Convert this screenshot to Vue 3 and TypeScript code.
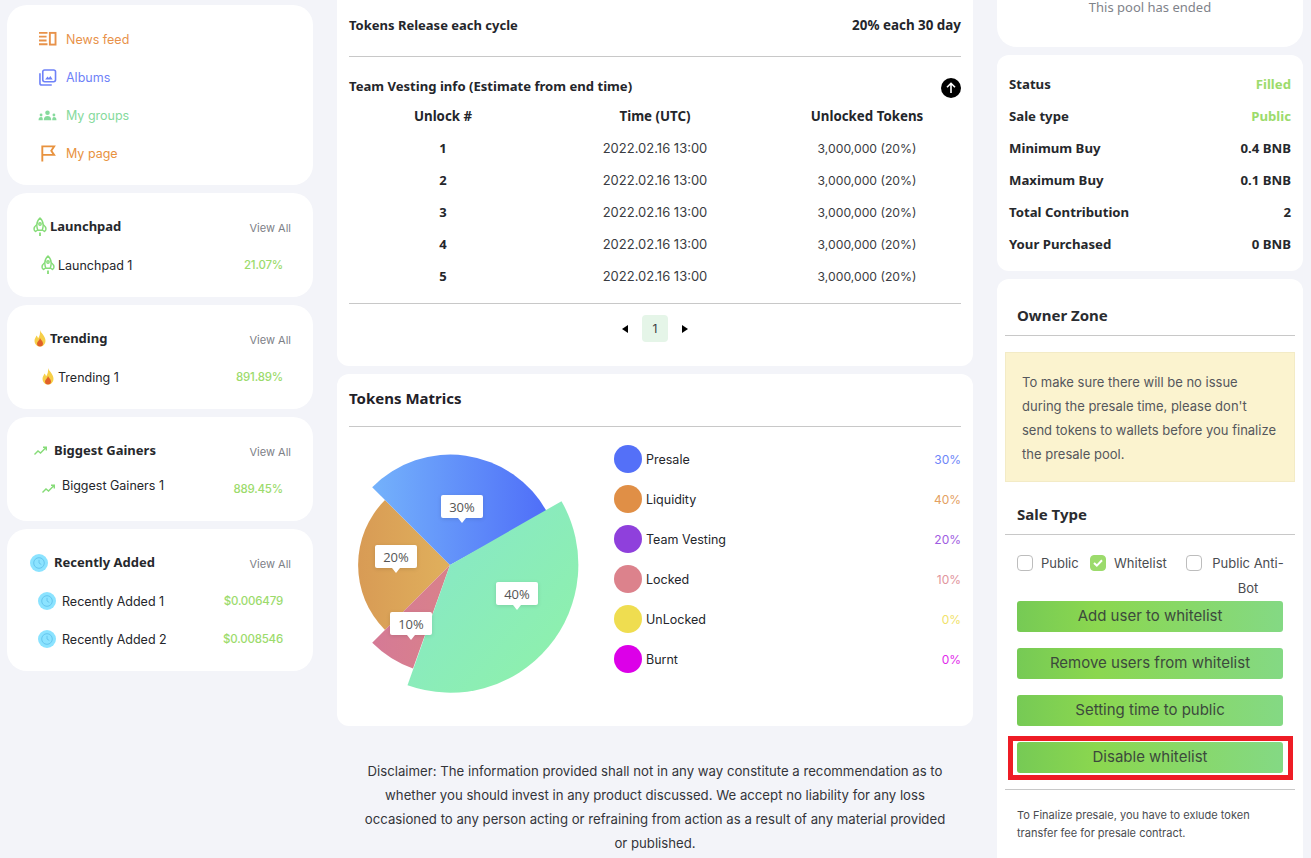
<script setup lang="ts">
const navItems = [
  { label: 'News feed', color: '#e8924a', icon: 'feed' },
  { label: 'Albums', color: '#6f82f8', icon: 'albums' },
  { label: 'My groups', color: '#86da9c', icon: 'groups' },
  { label: 'My page', color: '#e8923e', icon: 'flag' }
]

const lists = [
  { title: 'Launchpad', icon: 'rocket', cls: 'k-rocket', w: 14, h: 20, rows: [{ name: 'Launchpad 1', value: '21.07%' }] },
  { title: 'Trending', icon: 'fire', cls: 'k-fire', w: 14, h: 18, rows: [{ name: 'Trending 1', value: '891.89%' }] },
  { title: 'Biggest Gainers', icon: 'trend', cls: 'k-trend', w: 13, h: 10, rows: [{ name: 'Biggest Gainers 1', value: '889.45%' }] },
  {
    title: 'Recently Added',
    icon: 'clock',
    cls: 'k-clock',
    w: 18,
    h: 18,
    rows: [
      { name: 'Recently Added 1', value: '$0.006479' },
      { name: 'Recently Added 2', value: '$0.008546' }
    ]
  }
]

const vesting = [1, 2, 3, 4, 5]

const legend = [
  { label: 'Presale', value: '30%', color: '#5470f8' },
  { label: 'Liquidity', value: '40%', color: '#e08f46' },
  { label: 'Team Vesting', value: '20%', color: '#8f40dc' },
  { label: 'Locked', value: '10%', color: '#dc828c' },
  { label: 'UnLocked', value: '0%', color: '#efdd50' },
  { label: 'Burnt', value: '0%', color: '#dc00e8' }
]

const saleInfo = [
  { label: 'Status', value: 'Filled', green: true },
  { label: 'Sale type', value: 'Public', green: true },
  { label: 'Minimum Buy', value: '0.4 BNB' },
  { label: 'Maximum Buy', value: '0.1 BNB' },
  { label: 'Total Contribution', value: '2' },
  { label: 'Your Purchased', value: '0 BNB' }
]

const tips = [
  { label: '30%', cls: 'tip-a' },
  { label: '20%', cls: 'tip-b' },
  { label: '10%', cls: 'tip-c' },
  { label: '40%', cls: 'tip-d' }
]
</script>

<template>
  <div class="page">
    <!-- shared list icons -->
    <svg class="symbols" aria-hidden="true">
      <symbol id="rocket" viewBox="0 0 14 20">
        <g fill="none" stroke="#86dc78" stroke-width="1.400">
          <path d="M7 1c2.300 2 3.200 4.500 3.200 7 0 2-.4 3.500-1 5.200H4.800c-.6-1.700-1-3.200-1-5.200C3.800 5.500 4.700 3 7 1z" />
          <path d="M3.800 7.500C2 9 1 10.500 1 12c0 1 .6 2 1.600 2.500l2-1.500M10.200 7.500C12 9 13 10.500 13 12c0 1-.6 2-1.600 2.500l-2-1.500" />
          <path d="M7 15.500V19" stroke-width="1.800" />
          <circle cx="7" cy="7" r="1.200" />
        </g>
      </symbol>
      <symbol id="fire" viewBox="0 0 14 18">
        <path d="M7 0c.5 3 5.500 5.500 5.500 11A5.500 5.500 0 0 1 1.500 11C1.500 8.500 3 7.500 3.500 5.500 4.500 6.500 5 7.500 5 8.500 6.500 6.500 7.500 3 7 0z" fill="#f6cf48" />
        <path d="M7 8c.5 2 3 3 3 5.500a3 3 0 0 1-6 0C4 11.500 6.500 10.500 7 8z" fill="#e0602a" />
      </symbol>
      <symbol id="trend" viewBox="0 0 13 10">
        <path d="M.5 8.500l3.500-3.500 2.500 2L12 1.500M9 1.200h3.300v3.200" fill="none" stroke="#86dc78" stroke-width="1.400" />
      </symbol>
      <symbol id="clock" viewBox="0 0 18 18">
        <circle cx="9" cy="9" r="9" fill="#8be3ff" />
        <circle cx="9" cy="9" r="5.300" fill="none" stroke="#66c6ee" stroke-width="1" />
        <path d="M9 5.800V9l2.300 1.500" fill="none" stroke="#66c6ee" stroke-width="1" />
      </symbol>
    </svg>

    <!-- left column -->
    <aside class="col-left">
      <nav class="card nav-card">
        <a v-for="item in navItems" :key="item.label" class="nav-item" :style="{ color: item.color }">
          <svg class="nav-icon" viewBox="0 0 20 18" fill="none" stroke="currentColor" stroke-width="2">
            <template v-if="item.icon === 'feed'">
              <path d="M1 2h9M1 6h8M1 10h8M1 14h9" />
              <rect x="12.500" y="2" width="6" height="12.400" />
            </template>
            <template v-else-if="item.icon === 'albums'">
              <rect x="5" y="1" width="13.500" height="12.500" rx="2" stroke-width="1.700" />
              <path d="M2 4.500v10.500a2 2 0 0 0 2 2h10.500" stroke-width="1.700" />
              <path d="M7.500 11l2.500-3 1.500 1.500 1.500-2 2.500 3.500z" fill="currentColor" stroke="none" />
            </template>
            <template v-else-if="item.icon === 'groups'">
              <g fill="currentColor" stroke="none">
                <circle cx="10" cy="6" r="2.400" />
                <path d="M6 14c0-3 1.600-4.500 4-4.500s4 1.500 4 4.500z" />
                <circle cx="3.200" cy="8.500" r="1.500" />
                <path d="M.500 14c0-2 1-3.300 2.700-3.300S5 11.500 5 14z" />
                <circle cx="16.800" cy="8.500" r="1.500" />
                <path d="M15 14c0-2.500.8-3.300 1.800-3.300 1.700 0 2.700 1.300 2.700 3.300z" />
              </g>
            </template>
            <template v-else>
              <path d="M4.500 17.500V1.500h12.500l-3 4.500 3 4.500H4.500" />
            </template>
          </svg>
          <span>{{ item.label }}</span>
        </a>
      </nav>

      <section v-for="list in lists" :key="list.title" class="card list-card" :class="list.cls">
        <header class="list-head">
          <span class="list-icon">
            <svg :width="list.w" :height="list.h"><use :href="`#${list.icon}`" /></svg>
          </span>
          <h3>{{ list.title }}</h3>
          <span class="view-all">View All</span>
        </header>
        <div v-for="row in list.rows" :key="row.name" class="list-row">
          <span class="list-icon">
            <svg :width="list.w" :height="list.h"><use :href="`#${list.icon}`" /></svg>
          </span>
          <span class="row-name">{{ row.name }}</span>
          <span class="row-value">{{ row.value }}</span>
        </div>
      </section>
    </aside>

    <!-- center column -->
    <main class="col-center">
      <section class="card info-card">
        <div class="release-row">
          <span>Tokens Release each cycle</span>
          <span class="release-value">20% each 30 day</span>
        </div>
        <div class="vesting-head">
          <h4>Team Vesting info (Estimate from end time)</h4>
          <svg class="up-arrow" width="20" height="20" viewBox="0 0 20 20" fill="none">
            <circle cx="10" cy="10" r="10" fill="#000" />
            <path d="M10 15V5.500M6 9.300l4-4 4 4" stroke="#fff" stroke-width="1.600" />
          </svg>
        </div>
        <div class="vesting-grid vesting-title">
          <span>Unlock #</span>
          <span>Time (UTC)</span>
          <span>Unlocked Tokens</span>
        </div>
        <div v-for="n in vesting" :key="n" class="vesting-grid vesting-row">
          <span class="vest-num">{{ n }}</span>
          <span class="vest-time">2022.02.16 13:00</span>
          <span class="vest-amount">3,000,000 (20%)</span>
        </div>
        <div class="pager">
          <span class="tri tri-left"></span>
          <span class="page-num">1</span>
          <span class="tri tri-right"></span>
        </div>
      </section>

      <section class="card matrics-card">
        <h2>Tokens Matrics</h2>
        <div class="matrics-body">
          <div class="pie-wrap">
            <svg class="pie" width="240" height="256" viewBox="0 0 240 256">
              <defs>
                <linearGradient id="gBlue" x1="0" y1="0" x2="1" y2="0">
                  <stop offset="0" stop-color="#74b2fb" />
                  <stop offset="1" stop-color="#4f6ef8" />
                </linearGradient>
                <linearGradient id="gOrange" x1="0" y1="0" x2="1" y2="0">
                  <stop offset="0" stop-color="#d89b55" />
                  <stop offset="1" stop-color="#e0b05c" />
                </linearGradient>
                <linearGradient id="gPink" x1="0" y1="0" x2="1" y2="0">
                  <stop offset="0" stop-color="#d57a96" />
                  <stop offset="1" stop-color="#d9818a" />
                </linearGradient>
                <linearGradient id="gGreen" x1="0" y1="0" x2="1" y2="1">
                  <stop offset="0" stop-color="#86e6cc" />
                  <stop offset="1" stop-color="#8ff2a8" />
                </linearGradient>
              </defs>
              <!-- pie centre is 101,123 in this box -->
              <path d="M101 123L36 58A92 92 0 0 0 36 188z" fill="url(#gOrange)" />
              <path d="M101 123L23.200 200.800A110 110 0 0 0 64 226.600z" fill="url(#gPink)" />
              <path d="M101 123L23.200 45.200A110 110 0 0 1 198 70z" fill="url(#gBlue)" />
              <path d="M101 123L212.500 59.200A128 128 0 0 1 58.500 243.300z" fill="url(#gGreen)" />
            </svg>
            <div v-for="tip in tips" :key="tip.label" class="tip" :class="tip.cls">{{ tip.label }}</div>
          </div>
          <ul class="legend">
            <li v-for="item in legend" :key="item.label">
              <span class="dot" :style="{ background: item.color }"></span>
              <span class="legend-label">{{ item.label }}</span>
              <span class="legend-value" :style="{ color: item.color }">{{ item.value }}</span>
            </li>
          </ul>
        </div>
      </section>

      <p class="disclaimer">
        Disclaimer: The information provided shall not in any way constitute a recommendation as to whether you should invest in any product discussed. We accept no liability for any loss occasioned to any person acting or refraining from action as a result of any material provided or published.
      </p>
    </main>

    <!-- right column -->
    <aside class="col-right">
      <section class="card pool-card">This pool has ended</section>

      <section class="card sale-card">
        <div v-for="row in saleInfo" :key="row.label" class="sale-row">
          <span>{{ row.label }}</span>
          <span :class="{ 'is-green': row.green }">{{ row.value }}</span>
        </div>
      </section>

      <section class="card owner-card">
        <h2 class="owner-title">Owner Zone</h2>
        <div class="notice">
          To make sure there will be no issue during the presale time, please don't send tokens to wallets before you finalize the presale pool.
        </div>
        <h2 class="owner-title sale-title">Sale Type</h2>
        <div class="checks">
          <label class="check c-public"><span class="box"></span><span>Public</span></label>
          <label class="check c-white">
            <span class="box checked">
              <svg width="10" height="8" viewBox="0 0 10 8" fill="none"><path d="M1 4l2.800 2.600L9 1.200" stroke="#fff" stroke-width="2" /></svg>
            </span>
            <span>Whitelist</span>
          </label>
          <label class="check c-anti"><span class="box"></span><span class="anti-text">Public Anti-Bot</span></label>
        </div>
        <div class="buttons">
          <button type="button">Add user to whitelist</button>
          <button type="button">Remove users from whitelist</button>
          <button type="button">Setting time to public</button>
          <button type="button" class="flagged">Disable whitelist</button>
        </div>
        <p class="finalize">To Finalize presale, you have to exlude token transfer fee for presale contract.</p>
      </section>
    </aside>
  </div>
</template>

<style>
html,
body {
  margin: 0;
  background: #f3f4f9;
}
</style>

<style scoped>
.page {
  display: grid;
  grid-template-columns: 306px 636px 306px;
  column-gap: 24px;
  padding-left: 7px;
  height: 858px;
  overflow: hidden;
  background: #f3f4f9;
  font-family: Inter, 'Open Sans', sans-serif;
  color: #24262b;
}

.symbols {
  display: none;
}

.card {
  background: #fff;
  border-radius: 20px;
}

.col-left {
  display: flex;
  flex-direction: column;
  gap: 8px;
  padding-top: 5px;
}

.nav-card {
  padding: 15px 0 13px 31px;
}

.nav-item {
  display: flex;
  align-items: center;
  gap: 9px;
  height: 38px;
  font-size: 12.500px;
}

.nav-icon {
  width: 19px;
  height: 17px;
}

.list-card {
  padding: 14px 22px 13px 23px;
}

.list-head {
  display: flex;
  align-items: center;
  height: 39px;
}

.list-head h3 {
  margin: -2px 0 0;
  font: 700 13px 'Noto Sans', sans-serif;
  color: #26282c;
}

.view-all {
  margin-left: auto;
  padding-top: 2px;
  font-size: 11px;
  color: #7d8087;
}

.list-icon {
  display: flex;
  justify-content: center;
  width: 20px;
  flex: none;
}

.list-row {
  display: flex;
  align-items: center;
  height: 38px;
  padding: 0 8px;
  font-size: 12.500px;
}

.k-trend .list-icon,
.k-clock .list-icon {
  width: 24px;
  padding-right: 4px;
  box-sizing: border-box;
}

.k-clock .list-head .list-icon,
.k-clock .list-row .list-icon {
  margin-left: -1px;
  width: 25px;
  padding-right: 5px;
}

.row-name {
  color: #24262b;
}

.k-trend .row-name {
  margin-top: -8px;
}

.row-value {
  margin-left: auto;
  font-size: 11.500px;
  font-weight: 500;
  letter-spacing: -0.2px;
  color: #9cdb6c;
}

.col-center {
  display: flex;
  flex-direction: column;
  gap: 8px;
}

.info-card {
  border-radius: 0 0 12px 12px;
  padding: 0 12px;
  height: 366px;
  box-sizing: border-box;
}

.release-row {
  display: flex;
  justify-content: space-between;
  align-items: center;
  height: 50px;
  margin-bottom: 6px;
  font: 700 13px 'Noto Sans', sans-serif;
}

.release-value {
  font-size: 13.400px;
}

.vesting-head {
  display: flex;
  align-items: center;
  justify-content: space-between;
  height: 45px;
  border-top: 1px solid #c8c8c8;
  padding-top: 14px;
  box-sizing: border-box;
  margin-bottom: 2px;
}

.vesting-head h4 {
  margin: 0;
  font: 700 13.100px 'Noto Sans', sans-serif;
}

.up-arrow {
  margin-top: 4px;
}

.vesting-grid {
  display: grid;
  grid-template-columns: 188px 236px 188px;
  align-items: center;
  justify-items: center;
  height: 32px;
}

.vesting-title {
  height: 26px;
  font: 700 13.300px 'Noto Sans', sans-serif;
}

.vesting-row {
  color: #3a3c42;
}

.vesting-title + .vesting-row {
  margin-top: 3px;
}

.vest-num {
  font: 700 13px 'Noto Sans', sans-serif;
  color: #24262b;
}

.vest-time {
  font-size: 13px;
}

.vest-amount {
  font-size: 12.200px;
}

.pager {
  display: flex;
  justify-content: center;
  align-items: center;
  gap: 14px;
  margin-top: 11px;
  border-top: 1px solid #c8c8c8;
  padding-top: 11px;
}

.page-num {
  display: flex;
  align-items: center;
  justify-content: center;
  width: 26px;
  height: 27px;
  background: #e5f5e8;
  border-radius: 4px;
  font-size: 12px;
  color: #3a3c42;
}

.tri {
  width: 0;
  height: 0;
  border-top: 4.500px solid transparent;
  border-bottom: 4.500px solid transparent;
}

.tri-left {
  border-right: 6px solid #000;
}

.tri-right {
  border-left: 6px solid #000;
}

.matrics-card {
  border-radius: 12px;
  padding: 0 12px;
  height: 352px;
  box-sizing: border-box;
}

.matrics-card h2 {
  display: flex;
  align-items: center;
  height: 53px;
  margin: 0;
  padding-bottom: 4px;
  box-sizing: border-box;
  border-bottom: 1px solid #c8c8c8;
  font: 700 15px 'Noto Sans', sans-serif;
  color: #1f2128;
}

.matrics-body {
  display: flex;
}

.pie-wrap {
  position: relative;
  width: 265px;
  height: 270px;
  flex: none;
}

.pie {
  display: block;
  margin-top: 15px;
}

.tip {
  position: absolute;
  width: 42px;
  height: 23px;
  display: flex;
  align-items: center;
  justify-content: center;
  background: #fff;
  border-radius: 2px;
  box-shadow: 0 1px 4px rgba(0, 0, 0, 0.12);
  font: 13px 'Open Sans', sans-serif;
  color: #555;
}

.tip::after {
  content: '';
  position: absolute;
  left: 50%;
  bottom: -5px;
  margin-left: -4px;
  border-left: 4px solid transparent;
  border-right: 4px solid transparent;
  border-top: 5px solid #fff;
}

.tip-a {
  left: 92px;
  top: 68px;
}

.tip-b {
  left: 26px;
  top: 118px;
}

.tip-c {
  left: 41px;
  top: 185px;
}

.tip-d {
  left: 147px;
  top: 155px;
}

.legend {
  list-style: none;
  margin: 12px 0 0;
  padding: 0;
  flex: 1;
}

.legend li {
  display: flex;
  align-items: center;
  height: 40px;
  font-size: 12.500px;
}

.dot {
  width: 28px;
  height: 28px;
  border-radius: 50%;
  flex: none;
  margin-right: 4px;
}

.legend-value {
  margin-left: auto;
  font-size: 12px;
  opacity: 0.85;
}

.disclaimer {
  margin: 25px auto 0;
  width: 584px;
  text-align: center;
  font-size: 13.200px;
  line-height: 24px;
  color: #33353a;
}

.col-right {
  display: flex;
  flex-direction: column;
  gap: 8px;
}

.pool-card {
  height: 47px;
  box-sizing: border-box;
  padding-top: 1px;
  border-radius: 0 0 20px 20px;
  text-align: center;
  font: 13px/12px 'Noto Sans', sans-serif;
  color: #7f838a;
}

.sale-card {
  height: 216px;
  box-sizing: border-box;
  padding: 13px 12px;
  border-radius: 12px;
}

.sale-row {
  display: flex;
  justify-content: space-between;
  align-items: center;
  height: 32px;
  font: 700 13.200px 'Noto Sans', sans-serif;
  color: #26282c;
}

.is-green {
  color: #9cdb6c;
}

.owner-card {
  flex: 1;
  border-radius: 12px 12px 0 0;
  padding: 0 8px;
}

.owner-title {
  display: flex;
  align-items: center;
  height: 57px;
  margin: 0;
  padding: 16px 12px 0;
  box-sizing: border-box;
  border-bottom: 1px solid #c8c8c8;
  font: 700 15px 'Noto Sans', sans-serif;
  color: #2a2c30;
}

.notice {
  margin-top: 16px;
  padding: 17px 14px 16px 16px;
  height: 130px;
  box-sizing: border-box;
  background: #fbf3cf;
  border: 1px solid #f3ebc6;
  font-size: 13px;
  line-height: 24px;
  color: #55575c;
}

.sale-title {
  height: 53px;
  padding-top: 12px;
}

.checks {
  position: relative;
  height: 66px;
  font-size: 13px;
  color: #4a4c50;
}

.check {
  position: absolute;
  top: 20px;
  display: flex;
  gap: 8px;
}

.c-public {
  left: 12px;
}

.c-white {
  left: 85px;
}

.c-anti {
  left: 181px;
  width: 100px;
}

.anti-text {
  text-align: center;
  line-height: 25px;
  margin-top: -4px;
  flex: 1;
}

.box {
  width: 16px;
  height: 16px;
  flex: none;
  box-sizing: border-box;
  border: 1px solid #bdbdbd;
  border-radius: 4px;
  display: flex;
  align-items: center;
  justify-content: center;
}

.box.checked {
  background: #9cdb6c;
  border-color: #9cdb6c;
}

.buttons {
  display: flex;
  flex-direction: column;
  gap: 16px;
  padding: 0 12px;
}

button {
  position: relative;
  height: 31px;
  padding: 0 0 2px;
  border: 0;
  border-radius: 3px;
  background: linear-gradient(90deg, #76ca55 0%, #8bd74f 30%, #84d984 100%);
  font: 400 15px Inter, sans-serif;
  color: #3c4a3c;
}

/* red annotation box around the last button */
.flagged::after {
  content: '';
  position: absolute;
  left: -9px;
  right: -10px;
  top: -6px;
  bottom: -7px;
  border: 5px solid #ee1c25;
  pointer-events: none;
}

.finalize {
  margin: 16px 0 0;
  padding: 16px 12px 0;
  border-top: 1px solid #c8c8c8;
  font-size: 11px;
  line-height: 18px;
  color: #4a4c50;
}
</style>
